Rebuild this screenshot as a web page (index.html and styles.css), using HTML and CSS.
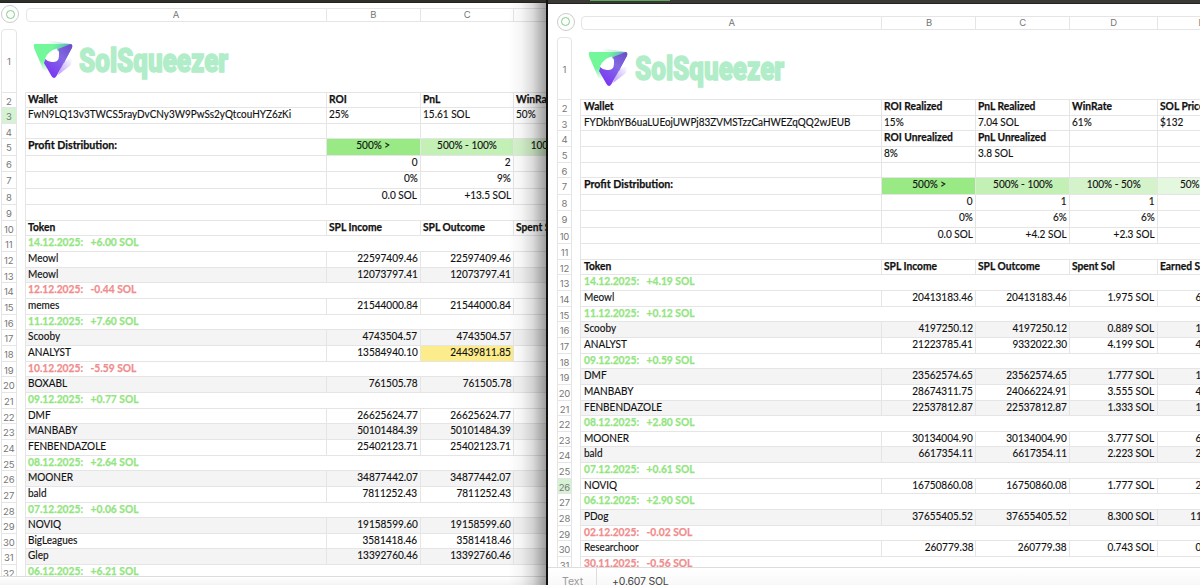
FILE: index.html
```html
<!DOCTYPE html>
<html lang="en">
<head>
  <meta charset="UTF-8" />
  <meta name="viewport" content="width=device-width, initial-scale=1.0" />
  <title>SolSqueezer</title>
  <link rel="stylesheet" href="styles.css">
</head>
<body>
  <!-- Shared logo -->
  <svg class="defs" width="0" height="0">
    <defs>
      <linearGradient id="greenFade" x1="0" y1="0" x2="1" y2="0.25">
        <stop offset="0.5" stop-color="#72f79b" />
        <stop offset="0.75" stop-color="#69c8b8" />
        <stop offset="1" stop-color="#5f7ccc" />
      </linearGradient>
      <linearGradient id="greenDown" x1="0" y1="0" x2="0" y2="1">
        <stop offset="0.55" stop-color="#72f79b" />
        <stop offset="1" stop-color="#72f79b" stop-opacity="0" />
      </linearGradient>
      <linearGradient id="purple" x1="1" y1="0" x2="0.3" y2="1">
        <stop offset="0" stop-color="#6a49c8" />
        <stop offset="0.45" stop-color="#8468e4" />
        <stop offset="1" stop-color="#7a35f5" />
      </linearGradient>
      <linearGradient id="topFade" x1="0" y1="0" x2="1" y2="0">
        <stop offset="0" stop-color="#72f79b" stop-opacity="0" />
        <stop offset="1" stop-color="#5f9fc0" stop-opacity="0.6" />
      </linearGradient>
      <linearGradient id="sideFade" x1="0" y1="1" x2="1" y2="0">
        <stop offset="0" stop-color="#8b55f5" stop-opacity="0.6" />
        <stop offset="1" stop-color="#8b55f5" stop-opacity="0" />
      </linearGradient>
      <symbol id="logo" viewBox="0 0 42 44">
        <path d="M13 2 L38 6 L36 9 L13 8 Z" fill="url(#topFade)" />
        <path d="M39 20 L38 27 L25 37 L30 24 Z" fill="url(#sideFade)" />
        <path d="M2 8 L22 8 L15 22 L14 34 L10 31 L1 10 Z" fill="url(#greenDown)" />
        <path d="M2 6 H37 Q40 6 39 9 L31 25 L26 13 L13 20 L7 20 L1 9 Q0 6 2 6 Z" fill="url(#greenFade)" />
        <path d="M38 6 Q40 7 39 10 L23.500 38 Q21 42 18.500 38 L11 25 L13 20 Q21 27 25 20 Q27 14 25 11 Z" fill="url(#purple)" />
        <path d="M23.500 10.500 Q27 16 25.500 21 Q24 24.500 19 24 Q14 23.500 12 20.500 Q15 13 23.500 10.500 Z" fill="#fff" />
      </symbol>
    </defs>
  </svg>

  <main>
    <section class="window left-window">
      <div class="titlebar"></div>
      <div class="content">
        <div class="columns" id="leftColumns"></div>
        <div class="sheet" id="leftSheet"></div>
        <div class="footer"></div>
      </div>
    </section>

    <section class="window right-window">
      <div class="titlebar"><span class="tab"></span></div>
      <div class="content">
        <div class="columns" id="rightColumns"></div>
        <div class="sheet" id="rightSheet"></div>
        <div class="footer">
          <span class="cell-type">Text</span>
          <span class="cell-value">+0.607 SOL</span>
        </div>
      </div>
    </section>
  </main>

  <script src="sheets.js"></script>
</body>
</html>
```
FILE: styles.css
```css
:root {
  --line: #e5e5e5;
  --green: #91e67e;
  --red: #f18c8c;
  --text: #111;
}
* {
  box-sizing: border-box;
}
body {
  margin: 0;
  background: #111;
  color: var(--text);
  font-family: Lato, "Open Sans", sans-serif;
  overflow: hidden;
}
.defs {
  display: block;
}
main {
  display: flex;
  width: 1200px;
  height: 585px;
  overflow: hidden;
}
.window {
  display: flex;
  flex-direction: column;
  overflow: hidden;
  position: relative;
}
.left-window {
  width: 546px;
}
.right-window {
  width: 652px;
  margin-left: 2px;
}
.titlebar {
  height: 3px;
  flex: none;
  background: #302e2b;
  border-bottom: 1px solid #252321;
}
.right-window .titlebar {
  height: 4px;
  background: #3b3936;
}
.tab {
  display: block;
  width: 80px;
  height: 1px;
  margin-left: 42px;
  background: #5daa5c;
}
.content {
  flex: 1;
  min-height: 0;
  background: #fff;
  display: flex;
  flex-direction: column;
}
.left-window .content {
  padding-top: 4px;
}
.right-window .content {
  padding: 10.6px 0 0 7.7px;
}
/* Shade cast by the window in front */
.left-window::after {
  content: "";
  position: absolute;
  inset: 3px 0 0 auto;
  width: 38px;
  background: linear-gradient(to right, rgba(0,0,0,0), rgba(0,0,0,0.04) 35%, rgba(0,0,0,0.14) 65%, rgba(0,0,0,0.38));
}

/* Column letters */
.columns {
  display: flex;
  flex: none;
  align-items: flex-start;
  height: 22px;
  width: 760px;
}
.corner {
  width: 18px;
  height: 18px;
  margin: -2px 6.500px 0 1px;
  border: 1px solid #ccc;
  border-radius: 50%;
  display: flex;
  align-items: center;
  justify-content: center;
  flex: none;
}
.corner::after {
  content: "";
  width: 7px;
  height: 7px;
  border: 1px solid #7fcf82;
  border-radius: 50%;
}
.col {
  height: 14px;
  margin-top: 1px;
  border: 1px solid var(--line);
  border-left: none;
  text-align: center;
  font: 9.5px/12px Inter, sans-serif;
  color: #777;
}
.col:nth-child(2) {
  border-left: 1px solid var(--line);
  border-radius: 4px 0 0 4px;
}
.a { width: 301.300px; }
.b { width: 94px; }
.c { width: 93.700px; }
.d { width: 87.800px; }
.e { width: 88px; }
.a, .b, .c, .d, .e { flex: none; }

/* Rows */
.sheet {
  flex: none;
  width: 760px;
  height: 547px;
  overflow: hidden;
}
.right-window .sheet {
  height: 530px;
}
.row {
  display: flex;
  height: 15.660px;
}
.row.logo-row {
  height: 63.500px;
}
.row.tall {
  height: 16.400px;
}
.num {
  flex: none;
  width: 15.500px;
  margin: 0 8px 0 1px;
  padding-top: 3px;
  border: 1px solid var(--line);
  border-top: none;
  text-align: center;
  font: 9.5px/11px Inter, sans-serif;
  letter-spacing: -0.2px;
  color: #777;
}
.logo-row .num {
  border-top: 1px solid var(--line);
  border-radius: 4px 4px 0 0;
  line-height: 58px;
}
.num.active {
  background: #d5f3d3;
}
.cells {
  display: flex;
  flex: none;
  border-bottom: 1px solid var(--line);
  border-left: 1px solid var(--line);
}
.logo-row .cells {
  width: 700px;
  border-left: none;
}
.cell {
  padding: 0 2.400px 0 2px;
  border-right: 1px solid var(--line);
  font-size: 11.400px;
  line-height: 12px;
  white-space: pre;
}
.cell.a {
  padding-left: 2.500px;
}
.cell span {
  display: inline-block;
  transform: scaleX(0.88);
  transform-origin: left;
  -webkit-text-stroke: 0.15px;
}
.cell.right span {
  transform-origin: right;
}
.cell.center span {
  transform-origin: center;
}
.info .a span {
  transform: scaleX(0.873);
}
.merged .cell {
  border-right-color: transparent;
}
.bold .cell span,
.level .a span {
  font-weight: 700;
  transform: scaleX(0.9);
  -webkit-text-stroke: 0.25px;
}
.level .a span {
  transform: scaleX(0.935);
}
.right {
  text-align: right;
}
.center {
  text-align: center;
}
.shaded .cells {
  background: #f4f4f4;
}
.gain .cell {
  color: var(--green);
}
.loss .cell {
  color: var(--red);
}
.level1 { background: #99e985; }
.level2 { background: #c2f0b5; }
.level3 { background: #d4f3cb; }
.level4 { background: #e4f7df; }
.highlight { background: #fdec8b; }

.brand {
  display: flex;
  padding: 9px 0 0 8px;
}
.brand svg {
  width: 42px;
  height: 44px;
}
.brand span {
  display: block;
  width: 190px;
  margin: 4px 0 0 4.500px;
  transform-origin: left top;
  transform: scaleX(0.765);
  font: 900 34px/36px Roboto, sans-serif;
  color: #b0edc8;
  -webkit-text-stroke: 1.500px #b0edc8;
}

.footer {
  flex: 1;
  background: linear-gradient(#fff, #f4f4f4);
  border-top: 1px solid #ddd;
  display: flex;
}
.right-window .footer {
  margin-left: -7.700px;
  font: 10.500px/28px Inter, sans-serif;
}
.cell-type {
  width: 49px;
  padding-left: 14px;
  color: #999;
  border-right: 1px solid #ddd;
}
.cell-value {
  padding-left: 15px;
  color: #444;
  letter-spacing: -0.2px;
}
```
FILE: sheets.js
```js
const columns = ['a', 'b', 'c', 'd', 'e'];

// Row kinds: info, head, level, stat, blank, gain / loss (day totals), token
const leftRows = [
  ['logo'],
  ['head', 'Wallet', 'ROI', 'PnL', 'WinRate', ''],
  ['info', 'FwN9LQ13v3TWCS5rayDvCNy3W9PwSs2yQtcouHYZ6zKi', '25%', '15.61 SOL', '50%', ''],
  ['info', '', '', '', '', ''],
  ['level', 'Profit Distribution:', '500% >', '500% - 100%', '100% - 50%', '50% - 0%'],
  ['stat', '', '0', '2', '', ''],
  ['stat', '', '0%', '9%', '', ''],
  ['stat', '', '0.0 SOL', '+13.5 SOL', '', ''],
  ['blank', ''],
  ['head', 'Token', 'SPL Income', 'SPL Outcome', 'Spent Sol', ''],
  ['gain', '14.12.2025:   +6.00 SOL'],
  ['token', 'Meowl', '22597409.46', '22597409.46'],
  ['token', 'Meowl', '12073797.41', '12073797.41'],
  ['loss', '12.12.2025:   -0.44 SOL'],
  ['token', 'memes', '21544000.84', '21544000.84'],
  ['gain', '11.12.2025:   +7.60 SOL'],
  ['token', 'Scooby', '4743504.57', '4743504.57'],
  ['token', 'ANALYST', '13584940.10', '24439811.85'],
  ['loss', '10.12.2025:   -5.59 SOL'],
  ['token', 'BOXABL', '761505.78', '761505.78'],
  ['gain', '09.12.2025:   +0.77 SOL'],
  ['token', 'DMF', '26625624.77', '26625624.77'],
  ['token', 'MANBABY', '50101484.39', '50101484.39'],
  ['token', 'FENBENDAZOLE', '25402123.71', '25402123.71'],
  ['gain', '08.12.2025:   +2.64 SOL'],
  ['token', 'MOONER', '34877442.07', '34877442.07'],
  ['token', 'bald', '7811252.43', '7811252.43'],
  ['gain', '07.12.2025:   +0.06 SOL'],
  ['token', 'NOVIQ', '19158599.60', '19158599.60'],
  ['token', 'BigLeagues', '3581418.46', '3581418.46'],
  ['token', 'Glep', '13392760.46', '13392760.46'],
  ['gain', '06.12.2025:   +6.21 SOL']
];

const rightRows = [
  ['logo'],
  ['head', 'Wallet', 'ROI Realized', 'PnL Realized', 'WinRate', 'SOL Price'],
  ['info', 'FYDkbnYB6uaLUEojUWPj83ZVMSTzzCaHWEZqQQ2wJEUB', '15%', '7.04 SOL', '61%', '$132'],
  ['head', '', 'ROI Unrealized', 'PnL Unrealized', '', ''],
  ['info', '', '8%', '3.8 SOL', '', ''],
  ['info', '', '', '', '', ''],
  ['level', 'Profit Distribution:', '500% >', '500% - 100%', '100% - 50%', '50% - 0%'],
  ['stat', '', '0', '1', '1', ''],
  ['stat', '', '0%', '6%', '6%', ''],
  ['stat', '', '0.0 SOL', '+4.2 SOL', '+2.3 SOL', ''],
  ['blank', ''],
  ['head', 'Token', 'SPL Income', 'SPL Outcome', 'Spent Sol', 'Earned Sol'],
  ['gain', '14.12.2025:   +4.19 SOL'],
  ['token', 'Meowl', '20413183.46', '20413183.46', '1.975 SOL', '6.165 SOL'],
  ['gain', '11.12.2025:   +0.12 SOL'],
  ['token', 'Scooby', '4197250.12', '4197250.12', '0.889 SOL', '1.010 SOL'],
  ['token', 'ANALYST', '21223785.41', '9332022.30', '4.199 SOL', '4.198 SOL'],
  ['gain', '09.12.2025:   +0.59 SOL'],
  ['token', 'DMF', '23562574.65', '23562574.65', '1.777 SOL', '1.802 SOL'],
  ['token', 'MANBABY', '28674311.75', '24066224.91', '3.555 SOL', '4.020 SOL'],
  ['token', 'FENBENDAZOLE', '22537812.87', '22537812.87', '1.333 SOL', '1.433 SOL'],
  ['gain', '08.12.2025:   +2.80 SOL'],
  ['token', 'MOONER', '30134004.90', '30134004.90', '3.777 SOL', '6.200 SOL'],
  ['token', 'bald', '6617354.11', '6617354.11', '2.223 SOL', '2.600 SOL'],
  ['gain', '07.12.2025:   +0.61 SOL'],
  ['token', 'NOVIQ', '16750860.08', '16750860.08', '1.777 SOL', '2.384 SOL'],
  ['gain', '06.12.2025:   +2.90 SOL'],
  ['token', 'PDog', '37655405.52', '37655405.52', '8.300 SOL', '11.200 SOL'],
  ['loss', '02.12.2025:   -0.02 SOL'],
  ['token', 'Researchoor', '260779.38', '260779.38', '0.743 SOL', '0.723 SOL'],
  ['loss', '30.11.2025:   -0.56 SOL']
];

function cellClass(kind, col, text) {
  let cls = 'cell ' + columns[col];
  if (col > 0 && (kind === 'stat' || kind === 'token')) cls += ' right';
  if (col > 0 && kind === 'level') cls += ' center level' + col;
  if (text === '24439811.85') cls += ' highlight';
  return cls;
}

function drawSheet(side, rows, activeRow) {
  document.getElementById(side + 'Columns').innerHTML = '<div class="corner"></div>' +
    columns.map(c => `<div class="col ${c}">${c.toUpperCase()}</div>`).join('');

  let tokens = 0;
  document.getElementById(side + 'Sheet').innerHTML = rows.map(([kind, ...values], i) => {
    const merged = ['gain', 'loss', 'blank'].includes(kind);
    let cls = 'row ' + kind;
    if (kind === 'logo') cls = 'row logo-row';
    if (kind === 'level' || kind === 'stat') cls += ' tall';
    if (merged) cls += ' merged';
    if (['head', 'gain', 'loss'].includes(kind)) cls += ' bold';
    if (kind === 'token' && tokens++ % 2) cls += ' shaded';

    const cells = kind === 'logo'
      ? '<div class="brand"><svg><use href="#logo"/></svg><span>SolSqueezer</span></div>'
      : columns.map((c, n) => {
          const text = values[n] || '';
          return `<div class="${cellClass(kind, n, text)}"><span>${text}</span></div>`;
        }).join('');
    const active = i + 1 === activeRow ? ' active' : '';
    return `<div class="${cls}"><div class="num${active}">${i + 1}</div><div class="cells">${cells}</div></div>`;
  }).join('');
}

drawSheet('left', leftRows, 3);
drawSheet('right', rightRows, 26);
```
